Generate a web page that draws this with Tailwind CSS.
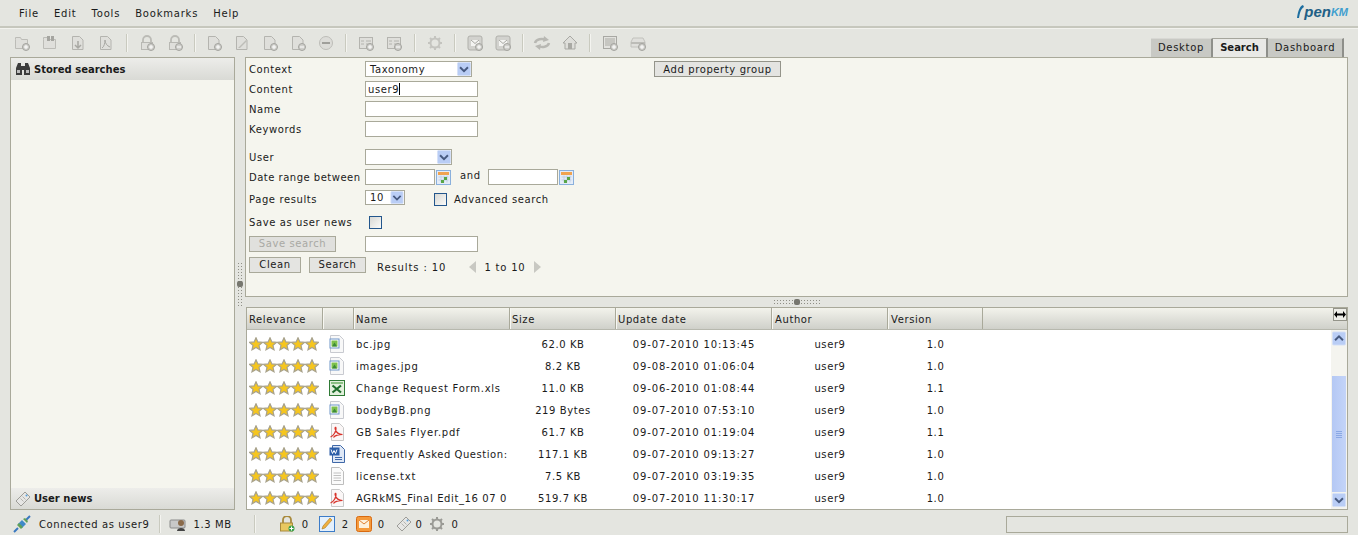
<!DOCTYPE html>
<html>

<head>
  <meta charset="UTF-8" />
  <script src="https://cdn.jsdelivr.net/npm/@tailwindcss/browser@4"></script>
  <title>OpenKM</title>
</head>

<body class="w-[1358px] h-[535px] overflow-hidden bg-[#e4e5e0] text-[#1a1a1a] text-[10px] tracking-[0.6px] font-['DejaVu_Sans',sans-serif]">
  <svg class="hidden">
    <symbol id="star" viewBox="0 0 14 14"><path d="M7 .8l1.900 4.100 4.500.5-3.400 3 1 4.400L7 10.500l-4 2.300 1-4.400-3.400-3 4.500-.5z" fill="#f6c61e" stroke="#a8a28c" stroke-width="1.200"/></symbol>
    <symbol id="stars" viewBox="0 0 70 14"><use href="#star" width="14" height="14"/><use href="#star" x="14" width="14" height="14"/><use href="#star" x="28" width="14" height="14"/><use href="#star" x="42" width="14" height="14"/><use href="#star" x="56" width="14" height="14"/></symbol>
    <symbol id="arrow" viewBox="0 0 16 16"><rect x=".5" y=".5" width="15" height="15" rx="1.500" fill="#b9cdf5" stroke="#d5e0f7"/><path d="M3.500 6l4.500 4.500L12.500 6" fill="none" stroke="#46597f" stroke-width="2.200"/></symbol>
    <symbol id="gdoc" viewBox="0 0 16 16"><path d="M2.500 1.500h7l3.500 3.500v9.500h-10.500z" fill="#dfdfdb" stroke="#b4b4af"/></symbol>
    <symbol id="gfolder" viewBox="0 0 16 16"><path d="M1.500 4.500v-2h5l1 2h6v9h-12z" fill="#dfdfdb" stroke="#bcbcb7"/></symbol>
    <symbol id="gcard" viewBox="0 0 16 16"><rect x="1.500" y="2.500" width="13" height="11" fill="#dfdfdb" stroke="#b4b4af"/><path d="M3 6h3M8 6h5M3 9h3M8 9h5" stroke="#b4b4af"/></symbol>
    <symbol id="glock" viewBox="0 0 16 16"><path d="M4 8V5a4 4 0 0 1 8 0v3" fill="none" stroke="#bbbbb6" stroke-width="1.800"/><rect x="2.500" y="7.500" width="11" height="7" fill="#dfdfdb" stroke="#b8b8b3"/></symbol>
    <symbol id="gmail" viewBox="0 0 16 16"><rect x="1" y="1" width="14" height="14" rx="2" fill="#d2d2ce" stroke="#b0b0ab"/><rect x="4" y="5" width="8" height="6" fill="#f4f4f2"/><path d="M4 5l4 3.500L12 5" fill="none" stroke="#a8a8a3"/></symbol>
    <symbol id="plus" viewBox="0 0 16 16"><circle cx="12" cy="12" r="3.500" fill="#cfcfcb" stroke="#a3a39e"/><path d="M10 12h4M12 10v4" stroke="#fff"/></symbol>
    <symbol id="minus" viewBox="0 0 16 16"><circle cx="12" cy="12" r="3.500" fill="#cfcfcb" stroke="#a3a39e"/><path d="M10 12h4" stroke="#fff"/></symbol>
    <symbol id="gear" viewBox="0 0 16 16"><circle cx="8" cy="8" r="4.500" fill="none" stroke="currentColor" stroke-width="2"/><path d="M8 1v3M8 12v3M1 8h3M12 8h3M3 3l2 2M11 11l2 2M13 3l-2 2M5 11l-2 2" stroke="currentColor" stroke-width="2"/></symbol>
    <symbol id="cal" viewBox="0 0 15 15"><rect x=".5" y=".5" width="14" height="14" fill="#e4ecf8" stroke="#8ab0dc"/><rect x="2" y="2" width="11" height="3" fill="#f0a350"/><path d="M2.500 7h10M2.500 10h10M5 5.500v7M8 5.500v7M11 5.500v7" stroke="#c4d2e4"/><rect x="8" y="7" width="3" height="3" fill="#58a648"/><rect x="5" y="10" width="3" height="3" fill="#58a648"/></symbol>
    <symbol id="img" viewBox="0 0 16 18"><path d="M1.500 .5h9l4 4v13h-13z" fill="#f8f8f8" stroke="#c8cad0"/><rect x="1" y="4" width="9" height="9" fill="#fff" stroke="#6f95c8"/><rect x="2.500" y="5.500" width="6" height="6" fill="#7cc04c"/><path d="M3 11.500l2.500-4 2.500 4z" fill="#3d8a3a"/></symbol>
    <symbol id="xls" viewBox="0 0 16 16"><rect x=".5" y=".5" width="15" height="15" fill="#e2f0dc" stroke="#2f7a35"/><rect x="2" y="2" width="12" height="2" fill="#8cc084"/><path d="M3.500 5.500l8.500 7M12 5.500l-8.500 7" stroke="#1f6f2c" stroke-width="2.200"/></symbol>
    <symbol id="pdf" viewBox="0 0 16 18"><path d="M2.500 .5h8l4 4v13h-12z" fill="#fbf7f7" stroke="#c9c9c9"/><path d="M1.500 14c3-1 6-6 5.500-9-.3-1.500-1.300-.5-.8 1 .7 2.500 3.200 5.500 7.300 5.500-3 0-8 1-9 3" fill="none" stroke="#d8332b" stroke-width="1.200"/></symbol>
    <symbol id="doc" viewBox="0 0 16 18"><path d="M3.500 .5h8l4 4v13h-12z" fill="#dfe8f6" stroke="#3f68a8"/><rect x=".5" y="2.500" width="10" height="8" fill="#2e5fa8"/><path d="M2 4.500l1.500 4 1.500-3 1.500 3 1.500-4" fill="none" stroke="#fff"/><path d="M6 12.500h7M6 14.500h7" stroke="#3f68a8"/></symbol>
    <symbol id="txt" viewBox="0 0 16 18"><path d="M2.500 .5h8l4 4v13h-12z" fill="#fbfbfb" stroke="#bdbdbd"/><path d="M4.500 6h7.500M4.500 8.500h7.500M4.500 11h7.500M4.500 13.500h7.500" stroke="#c0c0c0"/></symbol>
    <symbol id="tag" viewBox="0 0 16 16"><path d="M10 1l5 5-9 9-5-5z" fill="#e6e6e4" stroke="#9d9d98"/><path d="M7.500 5.500l3 3M5.500 7.500l3 3" stroke="#b5b5b0"/><circle cx="11.500" cy="4.500" r="1" fill="#58a0dc"/></symbol>
  </svg>

  <header class="h-[28px] border-b-2 border-b-[#c6c7bd] flex items-center pl-[19px] pr-[10px] gap-[15px] tracking-[0.8px]">
    <span>File</span><span>Edit</span><span>Tools</span><span>Bookmarks</span><span>Help</span>
    <div class="ml-auto flex items-end mb-[3px]">
      <svg width="7" height="15" viewBox="0 0 7 15"><path d="M6 1C3 2 1 6 0 14h2C3 8 4 5 7 3z" fill="#1d6ea0"/></svg>
      <span class="text-[15px] leading-none font-bold italic tracking-normal text-[#215f86] font-['Liberation_Sans',sans-serif]">pen</span><span class="text-[11px] leading-[13px] font-bold italic tracking-normal text-[#3f9fcf] font-['Liberation_Sans',sans-serif]">KM</span>
    </div>
  </header>

  <div class="h-[29px] flex items-end pl-[8px] pr-[14px] border-t border-t-[#f2f2ee]">
    <div class="h-[28px] flex items-center text-[#c4c4bf]">
      <span class="w-[28px] flex justify-center"><svg width="16" height="16"><use href="#gfolder"/><use href="#plus"/></svg></span>
      <span class="w-[28px] flex justify-center"><svg width="16" height="16"><use href="#gfolder"/><path d="M5 1h3v5H5zM9 1h3v5H9z" fill="#a5a5a0"/></svg></span>
      <span class="w-[28px] flex justify-center"><svg width="16" height="16"><use href="#gdoc"/><path d="M8 6v6M5 10l3 3 3-3" fill="none" stroke="#a8a8a3" stroke-width="1.500"/></svg></span>
      <span class="w-[28px] flex justify-center"><svg width="16" height="16"><use href="#gdoc"/><path d="M4 13c2-1 3-5 3-8 0 3 2 6 5 7" fill="none" stroke="#a8a8a3"/></svg></span>
      <span class="w-[13px] flex justify-center"><i class="block w-[2px] h-[18px] bg-[#c9cabf] border-r border-r-[#f4f4f0]"></i></span>
      <span class="w-[28px] flex justify-center"><svg width="16" height="16"><use href="#glock"/><use href="#plus"/></svg></span>
      <span class="w-[28px] flex justify-center"><svg width="16" height="16"><use href="#glock"/><use href="#minus"/></svg></span>
      <span class="w-[11px] flex justify-center"><i class="block w-[2px] h-[18px] bg-[#c9cabf] border-r border-r-[#f4f4f0]"></i></span>
      <span class="w-[28px] flex justify-center"><svg width="16" height="16"><use href="#gdoc"/><use href="#plus"/></svg></span>
      <span class="w-[28px] flex justify-center"><svg width="16" height="16"><use href="#gdoc"/><path d="M5 12l7-7 1 1-7 7H4z" fill="#bdbdb8"/></svg></span>
      <span class="w-[28px] flex justify-center"><svg width="16" height="16"><use href="#gdoc"/><use href="#plus"/></svg></span>
      <span class="w-[28px] flex justify-center"><svg width="16" height="16"><use href="#gdoc"/><use href="#minus"/></svg></span>
      <span class="w-[28px] flex justify-center"><svg width="16" height="16"><circle cx="8" cy="8" r="6.500" fill="#dcdcd8" stroke="#bdbdb8"/><rect x="4" y="7" width="8" height="2" fill="#9f9f9a"/></svg></span>
      <span class="w-[12px] flex justify-center"><i class="block w-[2px] h-[18px] bg-[#c9cabf] border-r border-r-[#f4f4f0]"></i></span>
      <span class="w-[28px] flex justify-center"><svg width="16" height="16"><use href="#gcard"/><use href="#plus"/></svg></span>
      <span class="w-[28px] flex justify-center"><svg width="16" height="16"><use href="#gcard"/><use href="#minus"/></svg></span>
      <span class="w-[13px] flex justify-center"><i class="block w-[2px] h-[18px] bg-[#c9cabf] border-r border-r-[#f4f4f0]"></i></span>
      <span class="w-[28px] flex justify-center"><svg width="16" height="16"><use href="#gear"/></svg></span>
      <span class="w-[12px] flex justify-center"><i class="block w-[2px] h-[18px] bg-[#c9cabf] border-r border-r-[#f4f4f0]"></i></span>
      <span class="w-[28px] flex justify-center"><svg width="16" height="16"><use href="#gmail"/><use href="#plus"/></svg></span>
      <span class="w-[28px] flex justify-center"><svg width="16" height="16"><use href="#gmail"/><use href="#minus"/></svg></span>
      <span class="w-[11px] flex justify-center"><i class="block w-[2px] h-[18px] bg-[#c9cabf] border-r border-r-[#f4f4f0]"></i></span>
      <span class="w-[28px] flex justify-center"><svg width="18" height="14" viewBox="0 0 18 14"><path d="M2 7c1-4 7-5 11-3" fill="none" stroke="#b8b8b3" stroke-width="2.500"/><path d="M11 0l5 4-6 2z" fill="#b8b8b3"/><path d="M16 7c-1 4-7 5-11 3" fill="none" stroke="#b8b8b3" stroke-width="2.500"/><path d="M7 14l-5-4 6-2z" fill="#b8b8b3"/></svg></span>
      <span class="w-[28px] flex justify-center"><svg width="16" height="16"><path d="M8 1L1 8h2v6h10V8h2z" fill="#dededa" stroke="#a9a9a4"/><rect x="6" y="8" width="4" height="6" fill="#a9a9a4"/></svg></span>
      <span class="w-[12px] flex justify-center"><i class="block w-[2px] h-[18px] bg-[#c9cabf] border-r border-r-[#f4f4f0]"></i></span>
      <span class="w-[28px] flex justify-center"><svg width="16" height="16"><rect x="1.500" y="1.500" width="13" height="12" fill="#e2e2de" stroke="#a8a8a3"/><rect x="3" y="3" width="10" height="8" fill="#c6c6c1"/><use href="#plus"/></svg></span>
      <span class="w-[28px] flex justify-center"><svg width="16" height="16"><path d="M3 3h10l2 4v5H1V7z" fill="#dfdfdb" stroke="#c2c2bd"/><rect x="1" y="7" width="14" height="2" fill="#bcbcb7"/><use href="#plus"/></svg></span>
    </div>
    <nav class="ml-auto flex h-[19px] items-stretch tracking-[0.7px]">
      <span class="w-[62px] pb-[1px] flex items-center justify-center bg-[#c8c9c4] border-t border-t-[#d8d8d4] border-r-2 border-r-[#8e8f8a]">Desktop</span>
      <span class="w-[55px] pb-[1px] flex items-center justify-center bg-[#e9e9e6] border-t border-t-[#a5a59c] border-r-2 border-r-[#8e8f8a] font-bold tracking-normal">Search</span>
      <span class="w-[76px] pb-[1px] flex items-center justify-center bg-[#c8c9c4] border-t border-t-[#d8d8d4] border-r-2 border-r-[#8e8f8a]">Dashboard</span>
    </nav>
  </div>

  <main class="h-[453px] flex pl-[10px] pr-[10px]">
    <aside class="w-[225px] flex flex-col border border-[#a9a99a] bg-[#f5f5ee]">
      <div class="h-[22px] flex items-center gap-[3px] pl-[4px] bg-gradient-to-b from-[#ededea] to-[#d9dad5] font-bold tracking-normal">
        <svg width="16" height="14" viewBox="0 0 16 14"><path d="M1 6l2-5h3v3h4V1h3l2 5v7h-6V8H7v5H1z" fill="#3c3c3c"/><rect x="2" y="8" width="3" height="3" fill="#bcbcbc"/><rect x="11" y="8" width="3" height="3" fill="#bcbcbc"/></svg>
        Stored searches
      </div>
      <div class="flex-1"></div>
      <div class="h-[21px] flex items-center gap-[3px] pl-[4px] bg-gradient-to-b from-[#ededea] to-[#d9dad5] font-bold tracking-normal">
        <svg width="16" height="16"><use href="#tag"/></svg>
        User news
      </div>
    </aside>

    <div class="w-[10px] flex flex-col items-center justify-center">
      <div class="w-[6px] h-[44px] bg-[radial-gradient(#8f8f86_0.8px,transparent_1px)] bg-[length:3px_3px] flex items-center justify-center">
        <i class="block w-[6px] h-[6px] rounded-[2px] bg-[#77776f]"></i>
      </div>
    </div>

    <div class="flex-1 flex flex-col min-w-0">
      <section class="h-[240px] border border-[#a9a99a] bg-[#f5f5ee] pl-[3px] pt-[1px]">
        <div class="h-[20px] flex items-center">
          <span class="w-[116px]">Context</span>
          <div class="w-[107px] h-[16px] bg-white border border-[#a9a99a] flex items-center justify-between pl-[4px]">Taxonomy<svg class="w-[14px] h-[14px]"><use href="#arrow"/></svg></div>
          <button class="ml-[182px] w-[127px] h-[16px] border border-[#94948a] bg-[#e4e4e1] flex items-center justify-center">Add property group</button>
        </div>
        <div class="h-[20px] flex items-center">
          <span class="w-[116px]">Content</span>
          <div class="w-[113px] h-[16px] bg-white border border-[#a9a99a] flex items-center pl-[2px]">user9<i class="block w-px h-[12px] bg-black"></i></div>
        </div>
        <div class="h-[20px] flex items-center">
          <span class="w-[116px]">Name</span>
          <input class="w-[113px] h-[16px] bg-white border border-[#a9a99a]" />
        </div>
        <div class="h-[20px] flex items-center">
          <span class="w-[116px]">Keywords</span>
          <input class="w-[113px] h-[16px] bg-white border border-[#a9a99a]" />
        </div>
        <div class="h-[20px] flex items-center mt-[8px]">
          <span class="w-[116px]">User</span>
          <div class="w-[87px] h-[16px] bg-white border border-[#a9a99a] flex items-center justify-end"><svg class="w-[14px] h-[14px]"><use href="#arrow"/></svg></div>
        </div>
        <div class="h-[20px] flex items-center">
          <span class="w-[116px] whitespace-nowrap tracking-[0.5px]">Date range between</span>
          <input class="w-[70px] h-[16px] bg-white border border-[#a9a99a]" />
          <svg class="w-[15px] h-[15px] ml-[1px]"><use href="#cal"/></svg>
          <span class="ml-[9px] mb-[3px] w-[28px]">and</span>
          <input class="w-[70px] h-[16px] bg-white border border-[#a9a99a]" />
          <svg class="w-[15px] h-[15px] ml-[1px]"><use href="#cal"/></svg>
        </div>
        <div class="h-[24px] flex items-center">
          <span class="w-[116px]">Page results</span>
          <div class="w-[40px] h-[15px] mb-[3px] bg-white border border-[#a9a99a] flex items-center justify-between pl-[4px]">10<svg class="w-[14px] h-[13px]"><use href="#arrow"/></svg></div>
          <i class="block w-[13px] h-[13px] ml-[29px] border border-[#23568c] bg-gradient-to-br from-[#d8d8d4] to-[#fbfbf9]"></i>
          <span class="ml-[7px]">Advanced search</span>
        </div>
        <div class="h-[22px] flex items-center">
          <span class="w-[120px]">Save as user news</span>
          <i class="block w-[13px] h-[13px] border border-[#23568c] bg-gradient-to-br from-[#d8d8d4] to-[#fbfbf9]"></i>
        </div>
        <div class="h-[21px] flex items-center">
          <button class="w-[87px] h-[16px] border border-[#a9a99a] bg-[#e0e0dd] text-[#a9a9a4] flex items-center justify-center mr-[29px]">Save search</button>
          <input class="w-[113px] h-[16px] bg-white border border-[#a9a99a]" />
        </div>
        <div class="h-[21px] flex items-center">
          <button class="w-[52px] h-[16px] border border-[#a9a99a] bg-[#e4e4e1] flex items-center justify-center">Clean</button>
          <button class="w-[57px] h-[16px] ml-[8px] border border-[#a9a99a] bg-[#e4e4e1] flex items-center justify-center">Search</button>
          <span class="ml-[11px] mt-[5px] tracking-[0.9px]">Results : 10</span>
          <svg class="ml-[23px] mt-[5px]" width="8" height="12"><path d="M7 0v12L0 6z" fill="#c8c8c2"/></svg>
          <span class="ml-[7px] mt-[5px] tracking-[0.8px]">1 to 10</span>
          <svg class="ml-[8px] mt-[5px]" width="8" height="12"><path d="M1 0v12l7-6z" fill="#c8c8c2"/></svg>
        </div>
      </section>

      <div class="h-[10px] flex items-center justify-center">
        <div class="w-[48px] h-[6px] bg-[radial-gradient(#8f8f86_0.8px,transparent_1px)] bg-[length:3px_3px] flex items-center justify-center">
          <i class="block w-[6px] h-[6px] rounded-[2px] bg-[#77776f]"></i>
        </div>
      </div>

      <section class="flex-1 min-h-0 ml-[1px] border border-[#a9a99a] bg-white flex flex-col">
        <div class="h-[22px] shrink-0 flex bg-gradient-to-b from-[#f3f3ec] to-[#cfd0ca] border-b border-b-[#b7b8ae]">
          <span class="w-[76px] pl-[2px] pt-[2px] border-r border-r-[#a9a99a] flex items-center">Relevance</span>
          <span class="w-[31px] border-l border-l-[#f7f7f2] border-r border-r-[#a9a99a]"></span>
          <span class="w-[156px] pl-[1px] pt-[2px] border-l border-l-[#f7f7f2] border-r border-r-[#a9a99a] flex items-center">Name</span>
          <span class="w-[106px] pl-[1px] pt-[2px] border-l border-l-[#f7f7f2] border-r border-r-[#a9a99a] flex items-center">Size</span>
          <span class="w-[156px] pl-[1px] pt-[2px] border-l border-l-[#f7f7f2] border-r border-r-[#a9a99a] flex items-center">Update date</span>
          <span class="w-[116px] pl-[2px] pt-[2px] border-l border-l-[#f7f7f2] border-r border-r-[#a9a99a] flex items-center">Author</span>
          <span class="w-[95px] pl-[2px] pt-[2px] border-l border-l-[#f7f7f2] border-r border-r-[#a9a99a] flex items-center">Version</span>
          <span class="flex-1"></span>
          <span class="w-[14px] h-[13px] border border-[#94948a] bg-[#eeeee8] flex items-center justify-center"><svg width="12" height="7" viewBox="0 0 12 7"><path d="M0 3.500L3 0v2.500h6V0l3 3.500L9 7V4.500H3V7z" fill="#000"/></svg></span>
        </div>
        <div class="flex-1 flex min-h-0">
          <div class="flex-1 min-w-0 overflow-hidden pt-[3px]">
            <table class="w-full table-fixed border-collapse">
              <colgroup><col class="w-[76px]" /><col class="w-[31px]" /><col class="w-[156px]" /><col class="w-[106px]" /><col class="w-[156px]" /><col class="w-[116px]" /><col class="w-[95px]" /><col /></colgroup>
              <tbody>
                <tr class="h-[22px]"><td class="pl-[2px]"><svg class="block w-[70px] h-[14px]"><use href="#stars"/></svg></td><td class="pl-[6px]"><svg class="block w-[16px] h-[18px]"><use href="#img"/></svg></td><td class="pl-[2px] whitespace-nowrap tracking-[0.75px]">bc.jpg</td><td class="text-center">62.0 KB</td><td class="text-center tracking-[0.85px]">09-07-2010 10:13:45</td><td class="text-center">user9</td><td class="text-center">1.0</td><td></td></tr>
                <tr class="h-[22px]"><td class="pl-[2px]"><svg class="block w-[70px] h-[14px]"><use href="#stars"/></svg></td><td class="pl-[6px]"><svg class="block w-[16px] h-[18px]"><use href="#img"/></svg></td><td class="pl-[2px] whitespace-nowrap tracking-[0.75px]">images.jpg</td><td class="text-center">8.2 KB</td><td class="text-center tracking-[0.85px]">09-08-2010 01:06:04</td><td class="text-center">user9</td><td class="text-center">1.0</td><td></td></tr>
                <tr class="h-[22px]"><td class="pl-[2px]"><svg class="block w-[70px] h-[14px]"><use href="#stars"/></svg></td><td class="pl-[6px]"><svg class="block w-[16px] h-[16px]"><use href="#xls"/></svg></td><td class="pl-[2px] whitespace-nowrap tracking-[0.75px]">Change Request Form.xls</td><td class="text-center">11.0 KB</td><td class="text-center tracking-[0.85px]">09-06-2010 01:08:44</td><td class="text-center">user9</td><td class="text-center">1.1</td><td></td></tr>
                <tr class="h-[22px]"><td class="pl-[2px]"><svg class="block w-[70px] h-[14px]"><use href="#stars"/></svg></td><td class="pl-[6px]"><svg class="block w-[16px] h-[18px]"><use href="#img"/></svg></td><td class="pl-[2px] whitespace-nowrap tracking-[0.75px]">bodyBgB.png</td><td class="text-center">219 Bytes</td><td class="text-center tracking-[0.85px]">09-07-2010 07:53:10</td><td class="text-center">user9</td><td class="text-center">1.0</td><td></td></tr>
                <tr class="h-[22px]"><td class="pl-[2px]"><svg class="block w-[70px] h-[14px]"><use href="#stars"/></svg></td><td class="pl-[6px]"><svg class="block w-[16px] h-[18px]"><use href="#pdf"/></svg></td><td class="pl-[2px] whitespace-nowrap tracking-[0.75px]">GB Sales Flyer.pdf</td><td class="text-center">61.7 KB</td><td class="text-center tracking-[0.85px]">09-07-2010 01:19:04</td><td class="text-center">user9</td><td class="text-center">1.1</td><td></td></tr>
                <tr class="h-[22px]"><td class="pl-[2px]"><svg class="block w-[70px] h-[14px]"><use href="#stars"/></svg></td><td class="pl-[6px]"><svg class="block w-[16px] h-[18px]"><use href="#doc"/></svg></td><td class="pl-[2px] whitespace-nowrap tracking-[0.55px]">Frequently Asked Question:</td><td class="text-center">117.1 KB</td><td class="text-center tracking-[0.85px]">09-07-2010 09:13:27</td><td class="text-center">user9</td><td class="text-center">1.0</td><td></td></tr>
                <tr class="h-[22px]"><td class="pl-[2px]"><svg class="block w-[70px] h-[14px]"><use href="#stars"/></svg></td><td class="pl-[6px]"><svg class="block w-[16px] h-[18px]"><use href="#txt"/></svg></td><td class="pl-[2px] whitespace-nowrap tracking-[0.75px]">license.txt</td><td class="text-center">7.5 KB</td><td class="text-center tracking-[0.85px]">09-07-2010 03:19:35</td><td class="text-center">user9</td><td class="text-center">1.0</td><td></td></tr>
                <tr class="h-[22px]"><td class="pl-[2px]"><svg class="block w-[70px] h-[14px]"><use href="#stars"/></svg></td><td class="pl-[6px]"><svg class="block w-[16px] h-[18px]"><use href="#pdf"/></svg></td><td class="pl-[2px] whitespace-nowrap">AGRkMS_Final Edit_16 07 0</td><td class="text-center">519.7 KB</td><td class="text-center tracking-[0.85px]">09-07-2010 11:30:17</td><td class="text-center">user9</td><td class="text-center">1.0</td><td></td></tr>
              </tbody>
            </table>
          </div>
          <div class="w-[16px] flex flex-col items-center bg-[#f4f4ef]">
            <svg class="w-[14px] h-[15px] rotate-180 mt-[1px]"><use href="#arrow"/></svg>
            <div class="h-[30px]"></div>
            <div class="w-[14px] flex-1 bg-gradient-to-r from-[#b4c8f4] to-[#c4d4f8] flex flex-col items-center justify-center gap-[1px]">
              <i class="block w-[6px] h-px bg-[#8aa8e4]"></i><i class="block w-[6px] h-px bg-[#8aa8e4]"></i><i class="block w-[6px] h-px bg-[#8aa8e4]"></i><i class="block w-[6px] h-px bg-[#8aa8e4]"></i>
            </div>
            <svg class="w-[14px] h-[16px] mb-[1px]"><use href="#arrow"/></svg>
          </div>
        </div>
      </section>
    </div>
  </main>

  <footer class="h-[25px] flex items-center pl-[13px] pr-[10px] pt-[3px]">
    <svg width="18" height="18" viewBox="0 0 18 18"><path d="M1 17l4-4M13 5l4-4" stroke="#3a78c0" stroke-width="2"/><path d="M5 9l4-4 4 4-4 4z" fill="#3f8ac8"/><path d="M4 10l4 4 2-2-4-4zM10 4l4 4 1-2-3-3z" fill="#5fa05a"/></svg>
    <span class="ml-[8px]">Connected as user9</span>
    <i class="block w-[2px] h-[18px] ml-[9px] bg-[#c9cabf] border-r border-r-[#f4f4f0]"></i>
    <svg class="ml-[8px]" width="18" height="16" viewBox="0 0 18 16"><rect x="1" y="4" width="15" height="8" rx="1" fill="#c8c8c8" stroke="#8a8a8a"/><circle cx="12" cy="7" r="3" fill="#8a6a4a"/><path d="M8 15c0-4 8-4 8 0z" fill="#444"/></svg>
    <span class="ml-[7px]">1.3 MB</span>
    <i class="block w-[2px] h-[18px] ml-[22px] bg-[#c9cabf] border-r border-r-[#f4f4f0]"></i>
    <svg class="ml-[23px]" width="16" height="16" viewBox="0 0 16 16"><path d="M4 7V4a4 4 0 0 1 8 0v3" fill="none" stroke="#a88a3c" stroke-width="1.800"/><rect x="1.500" y="7" width="12" height="8" fill="#e8c860" stroke="#a88a3c"/><circle cx="12.500" cy="12.500" r="3" fill="#3aa04a"/><path d="M10.500 12.500h4M12.500 10.500v4" stroke="#fff"/></svg>
    <span class="ml-[7px]">0</span>
    <svg class="ml-[10px]" width="16" height="16" viewBox="0 0 16 16"><rect x=".5" y=".5" width="15" height="15" fill="#e4f0fc" stroke="#3c7cc8"/><path d="M3 13l1-3 7-8 2 2-7 8z" fill="#f0b040" stroke="#a87820" stroke-width=".6"/></svg>
    <span class="ml-[7px]">2</span>
    <svg class="ml-[7px]" width="16" height="16" viewBox="0 0 16 16"><rect x=".5" y=".5" width="15" height="15" rx="2" fill="#f59a3c" stroke="#d86a10"/><rect x="3" y="4" width="10" height="8" fill="#fdf0dc"/><path d="M3 4l5 4 5-4" fill="none" stroke="#e08030"/></svg>
    <span class="ml-[6px]">0</span>
    <svg class="ml-[11px]" width="16" height="16"><use href="#tag"/></svg>
    <span class="ml-[4px]">0</span>
    <svg class="ml-[6px] text-[#9a9a95]" width="16" height="16"><use href="#gear"/></svg>
    <span class="ml-[7px]">0</span>
    <div class="ml-auto w-[342px] h-[17px] border border-[#a9a99a]"></div>
  </footer>
</body>

</html>
